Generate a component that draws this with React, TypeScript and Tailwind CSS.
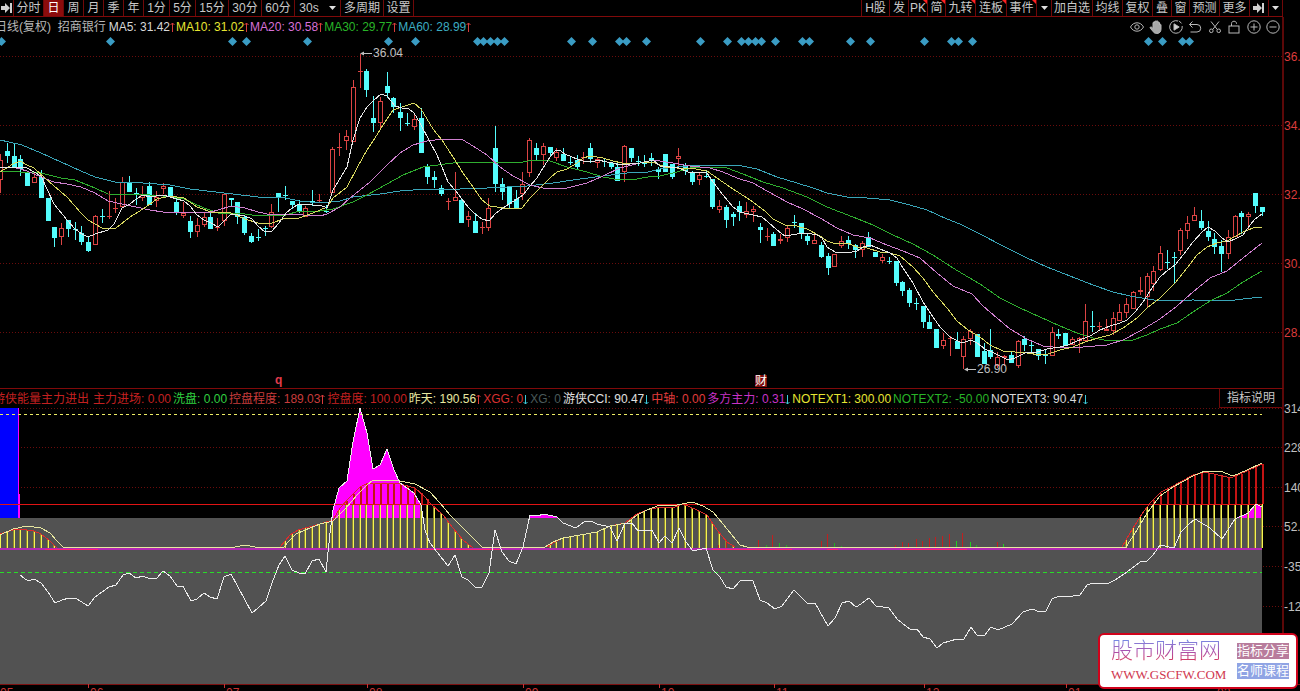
import type React from "react"
import { useId } from "react"
import { clsx } from "clsx"

type Point = [number, number]
// [direction, high, body top, body bottom, low]
type Candle = ["u" | "d", number, number, number, number]

interface TabItem {
  label: React.ReactNode
  name?: string
  width: string
  active?: boolean
  flagged?: boolean
}

interface Reading {
  text: string
  color: string
  trend?: "up" | "down"
}

const STEP = 6.784
const FIRST_X = 7.3
const candleX = (index: number) => Math.floor(FIRST_X + STEP * (index - 1))

const CANDLES: Candle[] = [
  ["u", 154, 160, 180, 193], ["d", 143, 151, 156, 163], ["d", 144, 156, 167, 167], ["d", 155, 159, 169, 176],
  ["d", 172, 172, 186, 186], ["u", 173, 177, 183, 183], ["d", 170, 177, 198, 198], ["d", 198, 198, 221, 221],
  ["d", 227, 227, 238, 247], ["u", 223, 228, 237, 245], ["d", 220, 220, 229, 237], ["d", 222, 229, 230, 240],
  ["d", 226, 233, 242, 245], ["d", 237, 242, 251, 252], ["u", 215, 216, 245, 245], ["d", 209, 216, 216, 223],
  ["u", 191, 216, 216, 219], ["u", 198, 208, 209, 213], ["u", 177, 182, 207, 207], ["d", 176, 183, 192, 192],
  ["d", 188, 193, 193, 205], ["u", 186, 194, 198, 201], ["d", 182, 186, 205, 205], ["u", 191, 197, 201, 207],
  ["u", 183, 186, 189, 194], ["d", 187, 187, 197, 197], ["d", 198, 202, 212, 215], ["u", 202, 213, 216, 218],
  ["d", 216, 221, 232, 238], ["u", 218, 225, 232, 237], ["u", 212, 217, 225, 227], ["d", 212, 217, 229, 229],
  ["u", 218, 227, 227, 231], ["u", 193, 194, 221, 226], ["d", 198, 198, 200, 206], ["d", 202, 202, 217, 224],
  ["d", 215, 217, 233, 235], ["d", 233, 236, 242, 243], ["d", 229, 237, 237, 241], ["d", 226, 228, 228, 236],
  ["u", 204, 212, 227, 228], ["d", 193, 193, 197, 212], ["d", 186, 195, 195, 200], ["d", 201, 201, 205, 209],
  ["d", 200, 205, 211, 213], ["u", 206, 208, 217, 217], ["d", 190, 201, 203, 206], ["u", 194, 200, 200, 203],
  ["d", 205, 211, 211, 213], ["u", 147, 149, 193, 193], ["u", 133, 147, 148, 156], ["u", 130, 136, 141, 150],
  ["u", 80, 87, 142, 142], ["u", 54, 71, 71, 88], ["d", 69, 71, 90, 97], ["d", 96, 118, 123, 132],
  ["u", 97, 101, 123, 128], ["d", 72, 86, 93, 98], ["d", 97, 98, 107, 113], ["d", 103, 112, 118, 131],
  ["d", 113, 123, 123, 126], ["u", 115, 119, 127, 130], ["d", 108, 118, 153, 153], ["d", 164, 166, 177, 184],
  ["d", 171, 177, 180, 188], ["d", 185, 188, 194, 196], ["u", 198, 201, 201, 210], ["u", 172, 197, 201, 201],
  ["d", 199, 200, 223, 223], ["u", 211, 216, 220, 227], ["d", 213, 221, 233, 233], ["u", 222, 227, 227, 234],
  ["u", 198, 208, 228, 231], ["d", 126, 148, 184, 192], ["d", 178, 184, 192, 200], ["d", 187, 187, 204, 208],
  ["d", 190, 199, 209, 209], ["u", 172, 184, 194, 200], ["u", 138, 140, 173, 177], ["d", 143, 148, 155, 160],
  ["u", 143, 146, 155, 165], ["d", 147, 147, 153, 157], ["u", 148, 152, 158, 161], ["d", 148, 154, 161, 161],
  ["d", 157, 162, 162, 165], ["d", 155, 160, 167, 170], ["u", 152, 157, 158, 164], ["d", 143, 148, 159, 163],
  ["u", 157, 159, 163, 168], ["d", 158, 161, 161, 167], ["d", 163, 163, 167, 169], ["d", 163, 167, 181, 181],
  ["u", 145, 146, 172, 182], ["d", 148, 148, 158, 162], ["d", 156, 161, 161, 166], ["d", 155, 162, 164, 167],
  ["d", 153, 158, 161, 166], ["d", 167, 169, 172, 179], ["d", 154, 154, 172, 172], ["d", 164, 164, 177, 179],
  ["u", 148, 156, 159, 167], ["d", 163, 165, 171, 175], ["d", 171, 173, 182, 185], ["u", 173, 175, 180, 185],
  ["d", 171, 176, 176, 178], ["d", 179, 179, 207, 209], ["u", 200, 206, 210, 213], ["d", 205, 207, 220, 228],
  ["d", 212, 214, 217, 226], ["d", 201, 206, 212, 221], ["u", 202, 211, 215, 218], ["u", 206, 209, 212, 222],
  ["d", 223, 227, 230, 243], ["u", 228, 236, 236, 241], ["d", 232, 234, 246, 246], ["u", 234, 239, 241, 244],
  ["u", 225, 228, 238, 242], ["d", 215, 222, 222, 228], ["d", 223, 223, 234, 239], ["d", 234, 236, 241, 245],
  ["u", 235, 240, 244, 244], ["d", 242, 245, 257, 258], ["d", 253, 256, 268, 275], ["u", 254, 254, 267, 267],
  ["u", 236, 241, 246, 248], ["d", 236, 240, 244, 249], ["d", 244, 245, 250, 258], ["u", 241, 243, 250, 257],
  ["d", 232, 237, 247, 247], ["d", 252, 252, 257, 257], ["u", 254, 257, 261, 263], ["d", 257, 261, 261, 264],
  ["d", 261, 261, 283, 286], ["d", 281, 282, 291, 296], ["d", 288, 290, 303, 307], ["d", 298, 303, 303, 310],
  ["d", 306, 306, 322, 328], ["d", 315, 322, 329, 329], ["d", 329, 329, 348, 348], ["u", 333, 340, 346, 349],
  ["u", 336, 338, 338, 356], ["d", 332, 341, 349, 349], ["u", 336, 339, 357, 369], ["u", 329, 331, 339, 345],
  ["d", 334, 334, 357, 357], ["d", 343, 351, 364, 364], ["d", 329, 350, 357, 359], ["u", 352, 357, 366, 368],
  ["u", 355, 356, 358, 366], ["d", 352, 355, 363, 363], ["u", 340, 341, 366, 368], ["d", 336, 339, 345, 351],
  ["d", 341, 345, 345, 352], ["d", 349, 349, 356, 360], ["d", 350, 355, 355, 364], ["u", 327, 332, 356, 356],
  ["d", 329, 334, 336, 339], ["d", 333, 333, 346, 346], ["u", 337, 339, 345, 345], ["u", 337, 338, 341, 353],
  ["u", 304, 321, 341, 341], ["d", 311, 326, 326, 332], ["u", 322, 326, 326, 330], ["u", 319, 329, 331, 331],
  ["u", 312, 318, 331, 335], ["u", 304, 312, 321, 321], ["u", 298, 304, 313, 318], ["u", 291, 292, 309, 309],
  ["u", 277, 290, 292, 295], ["u", 273, 276, 297, 308], ["u", 266, 271, 284, 291], ["u", 246, 253, 270, 271],
  ["d", 250, 262, 262, 269], ["d", 252, 257, 257, 283], ["u", 228, 230, 251, 255], ["u", 216, 223, 231, 239],
  ["u", 207, 215, 221, 221], ["d", 210, 221, 228, 230], ["d", 221, 231, 237, 241], ["d", 233, 239, 247, 254],
  ["d", 240, 246, 254, 272], ["u", 230, 237, 254, 259], ["u", 215, 216, 237, 237], ["d", 211, 213, 217, 234],
  ["u", 212, 214, 217, 229], ["d", 193, 193, 206, 213], ["d", 207, 207, 212, 216],
]

const MA_LINES = [
  {
    name: "MA60",
    color: "#3aa5b8",
    points:
      "0,140 22,145 41,153 61,162 81,171 95,177 115,182 143,183 170,185 190,189 224,193 258,197 286,198 299,201 320,203 340,201 353,197 380,194 400,191 427,189 460,189 487,188 507,187 527,186 553,183 580,179 603,176 627,173 648,172 660,169 677,167 697,165 737,165 757,169 777,177 797,183 813,188 827,193 847,197 867,198 890,200 910,205 927,210 947,219 960,224 980,234 1003,246 1027,258 1047,267 1070,276 1093,285 1113,292 1130,296 1160,301 1193,300 1227,301 1243,299 1262,297",
  },
  {
    name: "MA30",
    color: "#2fae2f",
    points:
      "0,171 20,172 41,173 61,178 75,180 95,188 108,194 150,195 163,196 184,199 204,208 218,213 245,214 258,216 286,215 299,211 320,211 333,209 353,202 367,195 387,184 403,175 423,167 453,163 470,162 497,163 523,162 533,160 550,161 567,167 587,172 603,177 620,180 637,179 648,177 660,176 677,172 690,168 707,167 727,168 743,174 763,182 783,188 807,197 827,207 853,217 873,225 893,235 913,244 933,255 953,268 968,277 980,284 1000,298 1020,308 1040,317 1060,326 1077,333 1093,338 1110,341 1133,340 1147,335 1160,329 1177,323 1193,312 1210,301 1227,293 1243,282 1262,271",
  },
  {
    name: "MA20",
    color: "#cf7fcf",
    points:
      "0,167 13,167 27,171 41,177 54,182 67,184 81,187 95,193 108,201 122,204 136,207 150,210 163,212 211,212 218,210 231,206 245,208 258,212 272,215 286,214 320,216 327,214 340,207 350,198 360,190 370,182 387,165 400,153 413,145 427,141 443,139 463,140 473,146 487,155 500,167 513,176 530,185 547,189 567,188 587,183 603,176 620,168 640,163 653,160 673,163 690,166 710,168 723,172 737,178 753,183 767,191 787,202 803,209 820,218 837,228 853,235 870,238 887,245 903,251 920,258 937,273 953,286 972,294 983,306 997,318 1010,329 1027,339 1043,346 1063,348 1083,347 1107,345 1123,340 1140,331 1160,319 1177,306 1193,292 1210,278 1227,271 1243,258 1262,243",
  },
  {
    name: "MA10",
    color: "#d8d860",
    points:
      "0,172 13,164 20,161 27,165 34,168 45,178 54,186 67,197 81,213 88,220 102,228 116,228 130,217 143,209 157,199 170,196 184,198 197,207 211,212 231,213 245,219 258,223 272,223 286,218 299,218 313,213 327,207 333,198 347,187 357,168 367,150 375,138 383,125 393,110 402,107 414,103 421,109 433,129 442,140 453,157 463,173 473,187 482,200 490,206 503,208 517,209 522,208 530,198 540,188 550,178 557,172 567,169 577,163 583,158 590,156 603,158 613,161 622,163 640,163 653,162 665,167 677,168 690,168 707,171 717,178 730,187 750,200 765,211 773,219 785,225 797,226 807,229 820,236 827,241 833,243 847,243 857,247 867,248 880,252 890,253 900,256 913,267 923,278 933,292 947,308 957,321 968,330 980,337 990,345 1003,351 1027,353 1040,355 1048,354 1060,350 1073,347 1085,342 1098,338 1110,335 1123,328 1137,318 1147,308 1160,298 1175,283 1187,268 1197,255 1207,247 1217,243 1227,241 1243,232 1253,228 1262,227",
  },
  {
    name: "MA5",
    color: "#e6e6e6",
    points:
      "0,168 13,167 27,168 34,172 41,176 47,189 54,204 67,220 75,229 82,234 88,237 95,234 108,230 114,224 122,208 130,204 136,199 143,195 150,197 163,195 177,199 184,201 190,206 197,215 204,220 211,223 218,227 224,221 231,214 245,216 252,219 258,226 265,232 272,231 279,223 286,213 292,208 299,204 306,204 313,205 320,205 327,208 333,190 347,167 353,140 360,118 367,107 373,101 381,94 387,96 395,106 402,108 409,109 414,113 420,123 430,142 437,155 442,167 448,182 455,190 462,199 468,207 475,214 482,219 489,221 496,213 503,208 509,204 517,199 523,195 530,186 537,178 543,168 550,157 556,150 561,151 565,154 572,157 577,159 583,161 592,162 598,160 607,162 613,163 620,165 640,163 653,160 660,166 670,167 679,168 688,172 707,173 713,182 723,195 733,207 740,212 753,215 762,217 768,222 777,230 785,236 797,234 807,233 817,235 822,238 827,247 835,252 848,253 857,251 863,247 870,245 880,249 890,253 897,258 903,268 913,283 923,302 933,317 940,327 950,337 962,343 971,340 977,343 985,349 992,352 998,355 1008,360 1015,358 1025,353 1037,352 1047,349 1060,347 1068,345 1077,341 1090,336 1100,330 1110,326 1120,323 1127,320 1135,312 1143,302 1152,288 1160,277 1168,270 1175,265 1183,255 1193,242 1202,232 1208,227 1215,231 1222,238 1228,242 1237,238 1243,235 1250,225 1255,219 1262,214",
  },
]

const EVENT_MARKS = [
  1, 110, 232, 246, 307, 388, 415, 477, 483, 490, 497, 504, 571, 592, 619, 626, 646, 700, 727, 741, 748, 755, 761, 775,
  802, 809, 850, 870, 924, 951, 958, 972, 1148, 1162, 1182, 1189,
]

const CCI: Point[] = [
  [20, 575], [28, 581], [34, 579], [41, 583], [48, 592], [55, 603], [62, 600], [69, 598], [77, 599], [88, 606],
  [95, 597], [102, 592], [109, 587], [116, 585], [123, 575], [129, 573], [136, 578], [143, 576], [150, 579],
  [157, 578], [163, 571], [170, 576], [177, 586], [183, 586], [191, 601], [197, 599], [204, 593], [210, 597],
  [217, 599], [224, 577], [231, 574], [238, 587], [245, 600], [252, 613], [258, 608], [266, 601], [272, 583],
  [279, 565], [285, 556], [292, 570], [299, 573], [305, 574], [312, 561], [319, 559], [326, 572], [330, 533],
  [333, 510], [339, 488], [347, 481], [353, 442], [360, 408], [367, 433], [373, 469], [380, 465], [387, 449],
  [394, 470], [400, 483], [407, 488], [414, 493], [421, 505], [425, 530], [430, 543], [437, 552], [448, 566],
  [455, 555], [462, 577], [468, 580], [475, 587], [482, 587], [489, 573], [495, 530], [502, 552], [509, 561],
  [516, 564], [523, 547], [530, 515], [537, 516], [544, 514], [557, 517], [563, 523], [576, 528], [584, 522],
  [591, 521], [597, 524], [610, 527], [617, 541], [625, 523], [632, 523], [638, 531], [652, 530], [659, 543],
  [665, 536], [672, 543], [679, 528], [686, 542], [693, 551], [706, 548], [713, 570], [720, 577], [726, 587],
  [733, 589], [740, 581], [747, 580], [753, 581], [760, 600], [767, 603], [775, 609], [782, 606], [794, 590],
  [808, 604], [815, 603], [828, 626], [835, 618], [842, 603], [849, 601], [856, 607], [861, 604], [869, 598],
  [876, 606], [889, 608], [898, 620], [910, 629], [917, 629], [923, 637], [930, 639], [937, 648], [943, 643],
  [957, 639], [964, 639], [971, 627], [977, 635], [984, 636], [991, 627], [998, 630], [1012, 624], [1023, 612],
  [1032, 609], [1040, 612], [1046, 611], [1052, 599], [1059, 596], [1066, 597], [1080, 595], [1087, 585],
  [1093, 583], [1107, 584], [1115, 580], [1127, 572], [1140, 562], [1147, 561], [1153, 555], [1160, 545],
  [1174, 548], [1181, 532], [1188, 525], [1195, 519], [1210, 528], [1222, 539], [1235, 519], [1248, 513],
  [1256, 504], [1262, 507],
]

const YESTERDAY: Point[] = [
  [0, 535], [13, 529], [27, 526], [41, 528], [50, 533], [57, 541], [63, 547], [235, 547], [245, 545], [255, 547],
  [284, 547], [288, 542], [296, 534], [305, 530], [320, 524], [333, 521], [345, 509], [358, 494], [367, 485],
  [373, 480], [390, 480], [400, 481], [415, 484], [430, 492], [440, 503], [450, 515], [463, 528], [473, 538],
  [482, 547], [545, 547], [553, 542], [563, 538], [597, 532], [610, 526], [627, 523], [637, 515], [647, 510],
  [660, 505], [677, 505], [692, 502], [703, 506], [713, 512], [723, 524], [740, 545], [747, 547], [1126, 547],
  [1137, 530], [1147, 513], [1160, 496], [1173, 487], [1193, 476], [1205, 471], [1220, 471], [1233, 476],
  [1247, 470], [1262, 463],
]

// One control curve for each stretch where the histogram is above zero
const CONTROL: Point[][] = [
  [[0, 534], [13, 530], [20, 529], [34, 531], [41, 534], [50, 541], [57, 548]],
  [
    [280, 547], [290, 535], [298, 530], [320, 524], [333, 520], [340, 508], [350, 497], [360, 487], [368, 483],
    [400, 484], [415, 488], [425, 497], [430, 503], [443, 515], [453, 528], [463, 540], [473, 548],
  ],
  [
    [547, 547], [553, 543], [563, 538], [597, 532], [610, 526], [625, 523], [637, 514], [647, 510], [660, 507],
    [672, 508], [683, 504], [697, 510], [707, 515], [717, 530], [727, 542], [735, 547],
  ],
  [
    [1122, 547], [1130, 533], [1142, 514], [1150, 503], [1161, 492], [1173, 486], [1193, 475], [1205, 472],
    [1227, 477], [1233, 477], [1247, 471], [1262, 464],
  ],
]

const MINOR_BARS: [number, number, string][] = [
  [718, 545, "#c02020"], [726, 540, "#c02020"], [758, 540, "#c02020"], [766, 545, "#20b020"],
  [772, 535, "#c02020"], [779, 543, "#20b020"], [786, 545, "#20b020"], [821, 541, "#c02020"],
  [827, 534, "#c02020"], [834, 543, "#20b020"], [841, 546, "#20b020"], [895, 545, "#c02020"],
  [902, 542, "#c02020"], [908, 543, "#c02020"], [916, 539, "#c02020"], [922, 541, "#c02020"],
  [929, 538, "#c02020"], [935, 537, "#c02020"], [942, 536, "#c02020"], [949, 534, "#c02020"],
  [956, 541, "#20d020"], [962, 533, "#c02020"], [970, 542, "#20d020"], [976, 545, "#20b020"],
  [997, 542, "#c02020"], [1003, 544, "#20d020"],
]

const ZERO_MARKS: Point[] = [[45, 98], [418, 500], [712, 792], [827, 838], [900, 967]]

const MONTHS: [number, string][] = [
  [-2, "05"], [88, "06"], [224, "07"], [367, "08"], [523, "09"], [659, "10"], [774, "11"], [924, "12"], [1066, "01"],
  [1215, "02"],
]

const PRICE_AXIS: [number, string][] = [
  [56, "36."], [125, "34."], [194, "32."], [263, "30."], [332, "28."],
]

const VALUE_AXIS: [number, string][] = [
  [408, "314"], [447, "228"], [487, "140"], [526, "52."], [566, "-35"], [606, "-12"],
]

const MA_READINGS: Reading[] = [
  { text: "MA5: 31.42", color: "text-[#d8d8d8]", trend: "up" },
  { text: "MA10: 31.02", color: "text-[#e6e632]", trend: "up" },
  { text: "MA20: 30.58", color: "text-[#d870d8]", trend: "up" },
  { text: "MA30: 29.77", color: "text-[#28b428]", trend: "up" },
  { text: "MA60: 28.99", color: "text-[#3cacc0]", trend: "up" },
]

const INDICATOR_READINGS: Reading[] = [
  { text: "主力进场: 0.00", color: "text-[#c42020]" },
  { text: "洗盘: 0.00", color: "text-[#30d040]" },
  { text: "控盘程度: 189.03", color: "text-[#c83c3c]", trend: "up" },
  { text: "控盘度: 100.00", color: "text-[#c42020]" },
  { text: "昨天: 190.56", color: "text-[#e8e8a0]", trend: "up" },
  { text: "XGG: 0", color: "text-[#d83030]", trend: "down" },
  { text: "XG: 0", color: "text-[#4a5a5a]" },
  { text: "游侠CCI: 90.47", color: "text-[#e0e0e0]", trend: "down" },
  { text: "中轴: 0.00", color: "text-[#e03c3c]" },
  { text: "多方主力: 0.31", color: "text-[#c832c8]", trend: "down" },
  { text: "NOTEXT1: 300.00", color: "text-[#e6e632]" },
  { text: "NOTEXT2: -50.00", color: "text-[#28b428]" },
  { text: "NOTEXT3: 90.47", color: "text-[#d8d8d8]", trend: "down" },
]

const toPoints = (points: Point[]) => points.map((p) => p.join(",")).join(" ")

function valueAt(points: Point[], x: number) {
  const next = points.findIndex((p) => p[0] >= x)
  if (next < 0 || x < points[0][0]) return null
  if (next === 0) return points[0][1]
  const [x1, y1] = points[next - 1]
  const [x2, y2] = points[next]
  return Math.round(y1 + ((y2 - y1) * (x - x1)) / (x2 - x1))
}

function SkipIcon() {
  return (
    <svg viewBox="0 0 12 12" className="h-3 w-3" fill="#d0d0d0" aria-hidden="true">
      <path d="M0 4h4V1l5 5-5 5V8H0zM9 1h2v10H9z" />
    </svg>
  )
}

function Caret() {
  return (
    <svg viewBox="0 0 7 4" className="h-1 w-[7px]" fill="#e0e0e0" aria-hidden="true">
      <path d="M0 0h7L3.5 4z" />
    </svg>
  )
}

const PERIODS: TabItem[] = [
  { label: <SkipIcon />, name: "跳转", width: "w-[14px]" },
  { label: "分时", width: "w-[30px]" },
  { label: "日", width: "w-5", active: true },
  { label: "周", width: "w-5" },
  { label: "月", width: "w-5" },
  { label: "季", width: "w-5" },
  { label: "年", width: "w-5" },
  { label: "1分", width: "w-[26px]" },
  { label: "5分", width: "w-[26px]" },
  { label: "15分", width: "w-[33px]" },
  { label: "30分", width: "w-[33px]" },
  { label: "60分", width: "w-[33px]" },
  { label: <span className="flex items-center gap-2.5">30s <Caret /></span>, name: "30s", width: "w-[46px]" },
  { label: "多周期", width: "w-[43px]" },
  { label: "设置", width: "w-[30px]" },
]

const TOOLS: TabItem[] = [
  { label: "H股", width: "w-7" },
  { label: "发", width: "w-[19px]" },
  { label: "PK", width: "w-[19px]", flagged: true },
  { label: "简", width: "w-[18px]", flagged: true },
  { label: "九转", width: "w-[30px]", flagged: true },
  { label: "连板", width: "w-[31px]", flagged: true },
  { label: "事件", width: "w-[30px]", flagged: true },
  { label: <Caret />, name: "更多事件", width: "w-[15px]" },
  { label: "加自选", width: "w-[41px]" },
  { label: "均线", width: "w-[30px]" },
  { label: "复权", width: "w-[30px]" },
  { label: "叠", width: "w-[19px]" },
  { label: "窗", width: "w-[18px]" },
  { label: "预测", width: "w-[30px]" },
  { label: "更多", width: "w-[30px]" },
  { label: <SkipIcon />, name: "隐藏", width: "w-[19px]" },
  { label: <Caret />, name: "菜单", width: "w-[14px]" },
]

function Tab({ label, name, width, active, flagged }: TabItem) {
  return (
    <button
      type="button"
      aria-label={name}
      className={clsx(
        "relative flex h-4 shrink-0 items-center justify-center border-r border-[#700808] whitespace-nowrap",
        width,
        active ? "bg-[#8c0c0c] text-white" : "text-[#c8c8c8]",
      )}
    >
      {label}
      {flagged && (
        <svg viewBox="0 0 4 4" className="absolute right-0 top-0 h-1 w-1" fill="#ff2020" aria-hidden="true">
          <path d="M0 0h4v4z" />
        </svg>
      )}
    </button>
  )
}

function ReadingText({ text, color, trend }: Reading) {
  return (
    <span className={clsx("flex shrink-0 items-center whitespace-nowrap", color)}>
      {text}
      {trend && (
        <svg viewBox="0 0 5 12" className="h-3 w-[5px]" fill="none" aria-hidden="true">
          {trend === "up" ? (
            <path d="M2.500 11V2M.5 4l2-2 2 2" stroke="#d83c3c" />
          ) : (
            <path d="M2.500 2v9M.5 9l2 2 2-2" stroke="#3cc8d8" />
          )}
        </svg>
      )}
    </span>
  )
}

const DRAW_TOOLS: { name: string; shape: React.ReactNode }[] = [
  {
    name: "显示",
    shape: (
      <>
        <path d="M.5 7C2 4.200 4.300 2.800 7 2.800S12 4.200 13.500 7C12 9.800 9.700 11.200 7 11.200S2 9.800.5 7z" />
        <circle cx="7" cy="7" r="2.200" />
      </>
    ),
  },
  {
    name: "拖动",
    shape: (
      <path
        fill="#a8a8a8"
        d="M4 8.500V3c0-1.200 1.500-1.200 1.500 0V2c0-1.300 1.700-1.300 1.700 0v-.3c0-1.300 1.700-1.300 1.700 0V3c0-1.200 1.600-1.200 1.600 0v2c0-1.100 1.500-1.100 1.500 0v4c0 2.700-1.500 4.500-4.200 4.500-2 0-3-.8-3.900-2.200L1.300 8.200c-.6-1 .5-1.700 1.300-1z"
      />
    ),
  },
  {
    name: "播放",
    shape: (
      <>
        <path d="M9 1A6.300 6.300 0 1 0 13.200 6M10 .8l2.500 2.600" />
        <path fill="#d0d0d0" d="M5 3.800v6.400L10.200 7z" />
      </>
    ),
  },
  { name: "撤销", shape: <path d="M4.500 1.500L1.500 4.500l3 3M1.500 4.500H9a3.700 3.700 0 0 1 0 7.500H2.500" /> },
  {
    name: "剪切",
    shape: (
      <>
        <path d="M3 1.500l6.300 8M11 1.500L4.700 9.500" />
        <circle cx="3.300" cy="10.800" r="1.800" />
        <circle cx="10.700" cy="10.800" r="1.800" />
      </>
    ),
  },
  {
    name: "锁定",
    shape: (
      <>
        <rect x="2" y="6" width="10" height="7" />
        <path d="M4.500 6V3.500C4.500.5 9.500.5 9.500 3.500V4" />
      </>
    ),
  },
  {
    name: "放大",
    shape: (
      <>
        <circle cx="7" cy="7" r="6.200" />
        <path d="M7 3.500v7M3.500 7h7" />
      </>
    ),
  },
  {
    name: "缩小",
    shape: (
      <>
        <circle cx="7" cy="7" r="6.200" />
        <path d="M3.500 7h7" />
      </>
    ),
  },
]

function AxisLabels({ rows, color }: { rows: [number, string][]; color: string }) {
  return (
    <g fill={color} fontSize="12">
      {rows.map(([y, text]) => (
        <text key={y} x="1284" y={y + 5}>
          {text}
        </text>
      ))}
    </g>
  )
}

function DottedGrid({ rows }: { rows: [number, string][] }) {
  return (
    <g stroke="#6a0c0c" strokeDasharray="1 2" shapeRendering="crispEdges">
      {rows.map(([y]) => (
        <line key={y} x1="0" x2="1282" y1={y + 0.5} y2={y + 0.5} />
      ))}
    </g>
  )
}

function PriceChart() {
  return (
    <svg viewBox="0 37 1300 351" className="block h-auto w-full" role="img" aria-label="招商银行 日线">
      <DottedGrid rows={PRICE_AXIS} />
      <rect x="1282" y="37" width="2" height="351" fill="#5c0808" />

      <g fill="#3a9cc4">
        {EVENT_MARKS.map((x) => (
          <path key={x} d={`M${x - 4} 41.500l4.500-4.500 4.500 4.500-4.500 4.500z`} />
        ))}
      </g>

      <g shapeRendering="crispEdges">
        {CANDLES.map(([direction, high, top, bottom, low], i) => {
          const x = candleX(i)
          const up = direction === "u"
          const color = up ? "#dc4444" : "#54fcfc"
          const height = Math.max(bottom - top, 1)
          return (
            <g key={i} fill={color}>
              <rect x={x} y={high} width="1" height={Math.max(low - high, 1)} />
              <rect x={x - 2} y={top} width="5" height={height} />
              {up && height > 2 && <rect x={x - 1} y={top + 1} width="3" height={height - 2} fill="#000" />}
            </g>
          )
        })}
      </g>

      <g fill="none" shapeRendering="crispEdges">
        {MA_LINES.map((line) => (
          <polyline key={line.name} points={line.points} stroke={line.color} />
        ))}
      </g>

      {/* Highest and lowest price */}
      <g fill="#c0c0c0" fontSize="12">
        <path d="M360 53.500l4-2v1.500h8v1h-8v1.500z" />
        <text x="373" y="57">36.04</text>
        <path d="M964 369.500l4-2v1.500h8v1h-8v1.500z" />
        <text x="977" y="373">26.90</text>
      </g>

      <text x="275" y="384" fontSize="12" fontWeight="bold" fill="#e03c4c">q</text>
      <rect x="755" y="375" width="12" height="12" fill="#7c0c0c" />
      <text x="755" y="385" fontSize="12" fill="#fff">财</text>

      <AxisLabels rows={PRICE_AXIS} color="#dc3c3c" />
    </svg>
  )
}

function IndicatorChart() {
  const clipId = useId()
  const bars = CANDLES.flatMap((_, i) => {
    const x = candleX(i)
    for (const curve of CONTROL) {
      const y = valueAt(curve, x)
      if (y !== null && y < 547) return [{ x, y }]
    }
    return []
  })

  return (
    <svg
      viewBox="0 408 1300 283"
      className="block h-auto w-full overflow-visible"
      role="img"
      aria-label="游侠能量主力进出"
    >
      <clipPath id={clipId}>
        <rect x="0" y="408" width="1263" height="110" />
      </clipPath>
      <DottedGrid rows={VALUE_AXIS} />
      <rect x="0" y="518" width="1262" height="166" fill="#525252" />
      <rect x="0" y="408" width="18" height="110" fill="#0000ff" />
      <path d="M18 408h1v86h1v24h-2z" fill="#ff00ff" />

      <polygon
        points={`20,700 ${toPoints(CCI)} 1262,700`}
        fill="#ff00ff"
        clipPath={`url(#${clipId})`}
      />

      <g shapeRendering="crispEdges">
        {bars.map(({ x, y }) => (
          <g key={x}>
            {y < 504 && <rect x={x} y={y} width="2" height={504 - y} fill="#c41414" />}
            <rect x={x} y={Math.max(y, 504)} width="1" height={548 - Math.max(y, 504)} fill="#f4f454" />
            <rect x={x - 1} y={Math.max(y, 504)} width="1" height={548 - Math.max(y, 504)} fill="#8c862c" />
          </g>
        ))}
        {MINOR_BARS.map(([x, y, color]) => (
          <rect key={x} x={x} y={y} width="1" height={548 - y} fill={color} />
        ))}
        <rect x="0" y="504" width="1262" height="1" fill="#e01414" />
        <rect x="0" y="548" width="1262" height="2" fill="#b428b4" />
        {ZERO_MARKS.map(([from, to]) => (
          <rect key={from} x={from} y="549" width={to - from} height="1" fill="#ff2078" />
        ))}
        <line x1="0" x2="1262" y1="414.5" y2="414.5" stroke="#ecec64" strokeDasharray="3 3" />
        <line x1="0" x2="1262" y1="572.5" y2="572.5" stroke="#28dc28" strokeDasharray="4 3" />
      </g>

      <g fill="none" shapeRendering="crispEdges">
        {CONTROL.map((curve) => (
          <polyline key={curve[0][0]} points={toPoints(curve)} stroke="#dc2c2c" />
        ))}
        <polyline points={toPoints(YESTERDAY)} stroke="#e8e8a0" />
        <polyline points={toPoints(CCI)} stroke="#ececec" />
      </g>

      <rect x="1282" y="408" width="2" height="276" fill="#5c0808" />
      <rect x="0" y="684" width="1300" height="1" fill="#7c1010" />
      {MONTHS.map(([x, month]) => (
        <g key={month} fill="#c83232" fontSize="12">
          <rect x={x} y="684" width="1" height="4" />
          <text x={x + 2} y="697">{month}</text>
        </g>
      ))}
      <AxisLabels rows={VALUE_AXIS} color="#c0c0c0" />
    </svg>
  )
}

function SiteBadge() {
  return (
    <a
      href="#site"
      className="absolute bottom-0.5 right-0.5 flex h-14 w-[200px] items-center justify-between rounded-md border-2 border-[#d0021b] bg-white pl-[11px] pr-[7px]"
    >
      <span className="flex flex-col items-start gap-1">
        <span className="bg-gradient-to-b from-[#6c8ce8] via-[#a850b0] to-[#e02848] bg-clip-text text-[22px] font-light leading-6 text-transparent">
          股市财富网
        </span>
        <span className="font-['Liberation_Serif',serif] text-[13px] leading-4 text-[#d03850]">WWW.GSCFW.COM</span>
      </span>
      <span className="flex flex-col gap-1 text-[13px] leading-4 text-white">
        <span className="bg-[#b87c9c]">指标分享</span>
        <span className="bg-[#90a4e4]">名师课程</span>
      </span>
    </a>
  )
}

export default function App() {
  return (
    <div className="min-h-screen bg-black">
      <main className="relative overflow-hidden font-['Liberation_Sans','Noto_Sans_CJK_SC',sans-serif] text-xs">
        <nav className="mr-[17px] flex h-[17px] justify-between border-b border-[#800a0a]">
          <div className="flex">
            {PERIODS.map((item, i) => (
              <Tab key={i} {...item} />
            ))}
          </div>
          <div className="flex border-l border-[#700808]">
            {TOOLS.map((item, i) => (
              <Tab key={i} {...item} />
            ))}
          </div>
        </nav>

        <section>
          <header className="mr-4 flex h-5 items-center justify-between border-r-2 border-[#5c0808] pr-0.5">
            <div className="-ml-[5px] flex items-center gap-px">
              <h1 className="mr-0.5 whitespace-nowrap text-[#b8b8b8]">日线(复权)&nbsp; 招商银行</h1>
              {MA_READINGS.map((reading) => (
                <ReadingText key={reading.text} {...reading} />
              ))}
            </div>
            <div className="flex w-[150px] justify-between">
              {DRAW_TOOLS.map((tool) => (
                <button key={tool.name} type="button" aria-label={tool.name}>
                  <svg viewBox="0 0 14 14" className="h-3.5 w-3.5" fill="none" stroke="#b8b8b8" aria-hidden="true">
                    {tool.shape}
                  </svg>
                </button>
              ))}
            </div>
          </header>
          <PriceChart />
        </section>

        <section>
          <header className="mr-4 flex h-5 items-stretch justify-between border-r-2 border-t border-r-[#5c0808] border-t-[#800a0a]">
            <div className="-ml-[7px] flex items-center gap-0.5">
              <h2 className="mr-0.5 whitespace-nowrap text-[#c42020]">游侠能量主力进出</h2>
              {INDICATOR_READINGS.map((reading) => (
                <ReadingText key={reading.text} {...reading} />
              ))}
            </div>
            <button type="button" className="shrink-0 border-b border-l border-[#700808] px-[7px] text-[#c8c8c8]">
              指标说明
            </button>
          </header>
          <IndicatorChart />
        </section>

        <SiteBadge />
      </main>
    </div>
  )
}
